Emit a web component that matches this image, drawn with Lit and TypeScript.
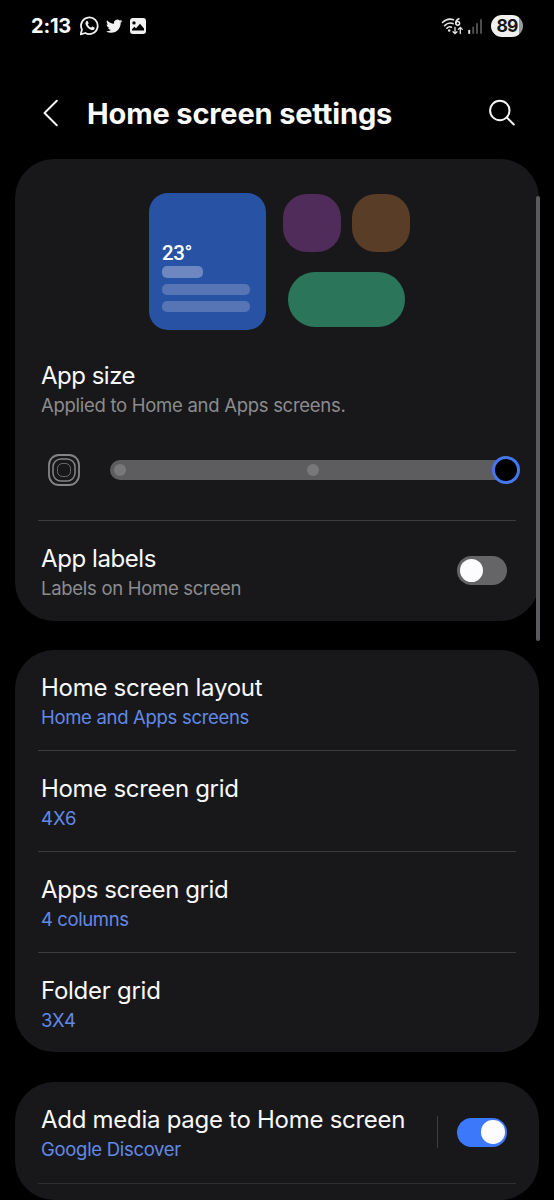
import { LitElement, html, css } from "lit";
import { customElement, property } from "lit/decorators.js";
import { styleMap } from "lit/directives/style-map.js";

@customElement("toggle-switch")
class ToggleSwitch extends LitElement {
  @property({ type: Boolean, reflect: true }) on = false;
  static styles = css`
    :host { display: flex; align-items: center; box-sizing: border-box; width: 50px; height: 29px; padding: 0 2.5px; border-radius: 15px; background: #656568; flex: none; }
    :host([on]) { background: #3b78fa; justify-content: flex-end; }
    .knob { width: 23.4px; height: 23.4px; border-radius: 50%; background: #fcfcff; }
  `;
  render() { return html`<div class="knob"></div>`; }
}

@customElement("setting-row")
class SettingRow extends LitElement {
  @property() heading = "";
  @property() detail = "";
  @property({ type: Number }) tracking = 0;
  @property({ type: Number }) detailTracking = 0;
  @property({ type: Boolean, reflect: true }) accent = false;
  static styles = css`
    :host { display: flex; align-items: flex-start; box-sizing: border-box; padding: 0 32px 0 26px; font-family: Inter, "Liberation Sans", sans-serif; white-space: nowrap; }
    .copy { flex: 1; min-width: 0; }
    .heading { font-size: 24px; line-height: 29px; color: #f8f8fa; }
    .detail { font-size: 18.5px; line-height: 24px; margin-top: 3px; color: #8c8c8f; }
    :host([accent]) .detail { color: #6189e6; }
  `;
  render() {
    return html`
      <div class="copy">
        <div class="heading" style=${styleMap({ letterSpacing: `${this.tracking}px` })}>${this.heading}</div>
        <div class="detail" style=${styleMap({ letterSpacing: `${this.detailTracking}px` })}>${this.detail}</div>
      </div>
      <slot></slot>
    `;
  }
}

@customElement("app-root")
class AppRoot extends LitElement {
  static styles = css`
    :host { display: block; position: relative; width: 554px; height: 1200px; overflow: hidden; background: #000; color: #fff; font-family: Inter, "Liberation Sans", sans-serif; }
    svg { display: block; flex: none; }
    .status { display: flex; align-items: center; height: 52px; padding: 0 31px; box-sizing: border-box; }
    .clock { width: 49px; font-size: 20px; font-weight: 700; letter-spacing: -0.2px; line-height: 24px; white-space: nowrap; }
    .spacer { flex: 1; }
    .battery { box-sizing: border-box; width: 32px; height: 22px; border-radius: 11px; background: linear-gradient(90deg, #f0f0f0 0 28px, #9a9a9a 28px); color: #161616; font-size: 17.5px; font-weight: 700; line-height: 22px; text-align: center; letter-spacing: -0.8px; margin-left: 7px; }
    .header { display: flex; align-items: center; height: 107px; padding: 0 38px 0 41px; box-sizing: border-box; }
    .title { flex: 1; margin: 17px 0 0 26px; font-size: 29px; font-weight: 700; letter-spacing: -0.15px; line-height: 36px; white-space: nowrap; color: #fafafa; }
    .icon { margin-top: 14px; }
    .card { margin: 0 15px 29px; background: #18181a; border-radius: 39px; overflow: hidden; box-sizing: border-box; }
    .sizes { height: 462px; padding-top: 34px; margin-bottom: 29px; }
    .grids { height: 402px; margin-bottom: 30px; }
    .media { height: 118px; }
    .preview { display: flex; gap: 17px; height: 168px; padding-left: 134px; }
    .widget { box-sizing: border-box; width: 117px; height: 136.5px; border-radius: 19px; background: #2853a4; padding: 48px 0 0 13px; }
    .temp { font-family: Roboto, sans-serif; font-size: 20.5px; font-weight: 500; line-height: 25px; letter-spacing: -0.4px; color: #fff; }
    .bar { height: 11.5px; width: 87.5px; border-radius: 5px; background: #5775b5; margin-bottom: 5.5px; }
    .bar.short { width: 40.5px; height: 12px; background: #6d88c1; }
    .apps { display: grid; grid-template-columns: 58px 58px; gap: 20px 11px; align-content: start; padding-top: 1px; }
    .app { height: 58px; border-radius: 24px; }
    .plum { background: #502c5b; }
    .rust { background: #5a3d27; }
    .pill { grid-column: 1 / -1; width: 117px; height: 54.5px; border-radius: 27.3px; background: #2b765b; margin-left: 5px; }
    .size-row { height: 84px; }
    .slider { display: flex; align-items: center; height: 60px; padding-left: 33px; margin-bottom: 20px; margin-top: -5px; }
    .track { display: flex; align-items: center; justify-content: space-between; margin-left: 30px; width: 410px; height: 20px; border-radius: 10px 0 0 10px; box-sizing: border-box; padding-left: 4px; background: linear-gradient(90deg, #5d5d60 0 396px, transparent 396px); }
    .dot { width: 12px; height: 12px; border-radius: 50%; background: #78787b; }
    .middle { margin-left: 8px; }
    .thumb { box-sizing: border-box; width: 28.5px; height: 28.5px; border: 3px solid #4578f0; border-radius: 50%; background: #000; }
    .line { height: 1px; margin: 0 23px; background: #3b3b3d; }
    .labels { padding-top: 23px; }
    .switch { margin-top: 12px; }
    .grid-row { height: 100px; padding-top: 23px; }
    .media-row { height: 101px; padding-top: 23px; }
    .media-line { background: #303033; }
    .control { display: flex; align-items: center; gap: 19px; margin-top: 11px; }
    .rule { width: 1px; height: 32px; background: #3e3e40; }
    .scroll { position: absolute; right: 14px; top: 196px; width: 4.5px; height: 445px; border-radius: 2px; background: #5b5b5e; }
  `;

  rows = [
    { h: "Home screen layout", d: "Home and Apps screens", t: -0.28, dt: -0.31 },
    { h: "Home screen grid", d: "4X6", t: -0.31, dt: 0 },
    { h: "Apps screen grid", d: "4 columns", t: -0.42, dt: -0.4 },
    { h: "Folder grid", d: "3X4", t: -0.27, dt: 0 },
  ];

  render() {
    return html`
      <div class="status">
        <div class="clock">2:13</div>
        <svg width="68" height="22" viewBox="0 0 68 22" fill="#f2f2f2">
          <path d="M.7 19.3 2 14.6A8.3 8.3 0 1 1 5.3 18Z" fill="none" stroke="#f2f2f2" stroke-width="1.8" stroke-linejoin="round"/>
          <path d="M6.3 6.3c.5-.6 1.3-.6 1.6.1l.7 1.6c.2.5-.6 1.1-.8 1.4.8 1.6 1.8 2.5 3.4 3.2.5-.4.9-1.2 1.4-1l1.7.8c.7.4.4 1.3 0 1.8-.8 1-2.2 1-3.5.5C8.2 13.7 6.4 11.8 5.7 9.6 5.3 8.3 5.5 7.1 6.3 6.3Z"/>
          <g transform="translate(26 3) scale(.68)"><path d="M23.953 4.57a10 10 0 01-2.825.775 4.958 4.958 0 002.163-2.723c-.951.555-2.005.959-3.127 1.184a4.92 4.92 0 00-8.384 4.482C7.69 8.095 4.067 6.13 1.64 3.162a4.822 4.822 0 00-.666 2.475c0 1.71.87 3.213 2.188 4.096a4.904 4.904 0 01-2.228-.616v.06a4.923 4.923 0 003.946 4.827 4.996 4.996 0 01-2.212.085 4.936 4.936 0 004.604 3.417 9.867 9.867 0 01-6.102 2.105c-.39 0-.779-.023-1.17-.067a13.995 13.995 0 007.557 2.209c9.053 0 13.998-7.496 13.998-13.985 0-.21 0-.42-.015-.63A9.935 9.935 0 0024 4.59z"/></g>
          <path fill-rule="evenodd" d="M53 3h10a3 3 0 0 1 3 3v10a3 3 0 0 1-3 3H53a3 3 0 0 1-3-3V6a3 3 0 0 1 3-3Zm1 3.2a1.7 1.7 0 1 0 0 3.4 1.7 1.7 0 0 0 0-3.4ZM52 15.5h12v-2l-4-4.7-4 4.5-1.7-1.5L52 14.2Z"/>
        </svg>
        <div class="spacer"></div>
        <svg width="44" height="22" viewBox="0 0 44 22" fill="none" stroke="#e6e6e6" stroke-width="1.6" stroke-linecap="round">
          <path d="M2.500 7.500Q7.500 2.600 13.500 4.800M4.600 10.600Q8.500 6.800 13 8.600M6.900 13.200Q9 11 11.400 12.200"/>
          <circle cx="9.200" cy="15.500" r="1.200" fill="#e6e6e6" stroke="none"/>
          <path d="M19 3.800Q15.700 5 15.700 8.200" stroke-width="1.500"/><circle cx="17.700" cy="8.300" r="1.900" stroke-width="1.500"/>
          <path d="M15 12.500v6M13 16.700l2 2 2-2M20.300 18.500v-6M18.300 14.400l2-2 2 2" stroke-width="1.300"/>
          <path d="M29.200 15.800v2.200" stroke-width="2"/>
          <path d="M33.200 12.500v5.500M37 9v9M41 5v13" stroke="#555" stroke-width="1.800"/>
        </svg>
        <div class="battery">89</div>
      </div>
      <div class="header">
        <svg class="icon" width="20" height="30" viewBox="0 0 20 30" fill="none" stroke="#f4f4f4" stroke-width="2" stroke-linecap="round" stroke-linejoin="round"><path d="M15.800 2.800 3.500 15 15.800 27.200"/></svg>
        <div class="title">Home screen settings</div>
        <svg class="icon" width="28" height="28" viewBox="0 0 28 28" fill="none" stroke="#f4f4f4" stroke-width="2" stroke-linecap="round"><circle cx="11.800" cy="11.500" r="9.700"/><path d="m18.800 18.500 7 7"/></svg>
      </div>

      <div class="card sizes">
        <div class="preview">
          <div class="widget">
            <div class="temp">23°</div>
            <div class="bar short"></div>
            <div class="bar"></div>
            <div class="bar"></div>
          </div>
          <div class="apps">
            <div class="app plum"></div><div class="app rust"></div>
            <div class="pill"></div>
          </div>
        </div>
        <setting-row class="size-row" heading="App size" detail="Applied to Home and Apps screens." .tracking=${-0.5} .detailTracking=${-0.28}></setting-row>
        <div class="slider">
          <svg width="32" height="32" viewBox="0 0 32 32" fill="none" stroke="#858588">
            <rect x="1" y="1" width="30" height="30" rx="10" stroke-width="1.800"/>
            <rect x="5" y="5" width="22" height="22" rx="8" stroke-width="1.500"/>
            <rect x="9.500" y="9.500" width="13" height="13" rx="5" stroke-width="1" stroke="#6d6d70"/>
          </svg>
          <div class="track"><div class="dot"></div><div class="dot middle"></div><div class="thumb"></div></div>
        </div>
        <div class="line"></div>
        <setting-row class="labels" heading="App labels" detail="Labels on Home screen" .tracking=${-0.42} .detailTracking=${-0.29}>
          <toggle-switch class="switch"></toggle-switch>
        </setting-row>
      </div>

      <div class="card grids">
        ${this.rows.map((r, i) => html`
          ${i ? html`<div class="line"></div>` : null}
          <setting-row class="grid-row" accent heading=${r.h} detail=${r.d} .tracking=${r.t} .detailTracking=${r.dt}></setting-row>
        `)}
      </div>

      <div class="card media">
        <setting-row class="media-row" accent heading="Add media page to Home screen" detail="Google Discover" .tracking=${-0.28} .detailTracking=${-0.3}>
          <div class="control"><div class="rule"></div><toggle-switch on></toggle-switch></div>
        </setting-row>
        <div class="line media-line"></div>
      </div>
      <div class="scroll"></div>
    `;
  }
}
